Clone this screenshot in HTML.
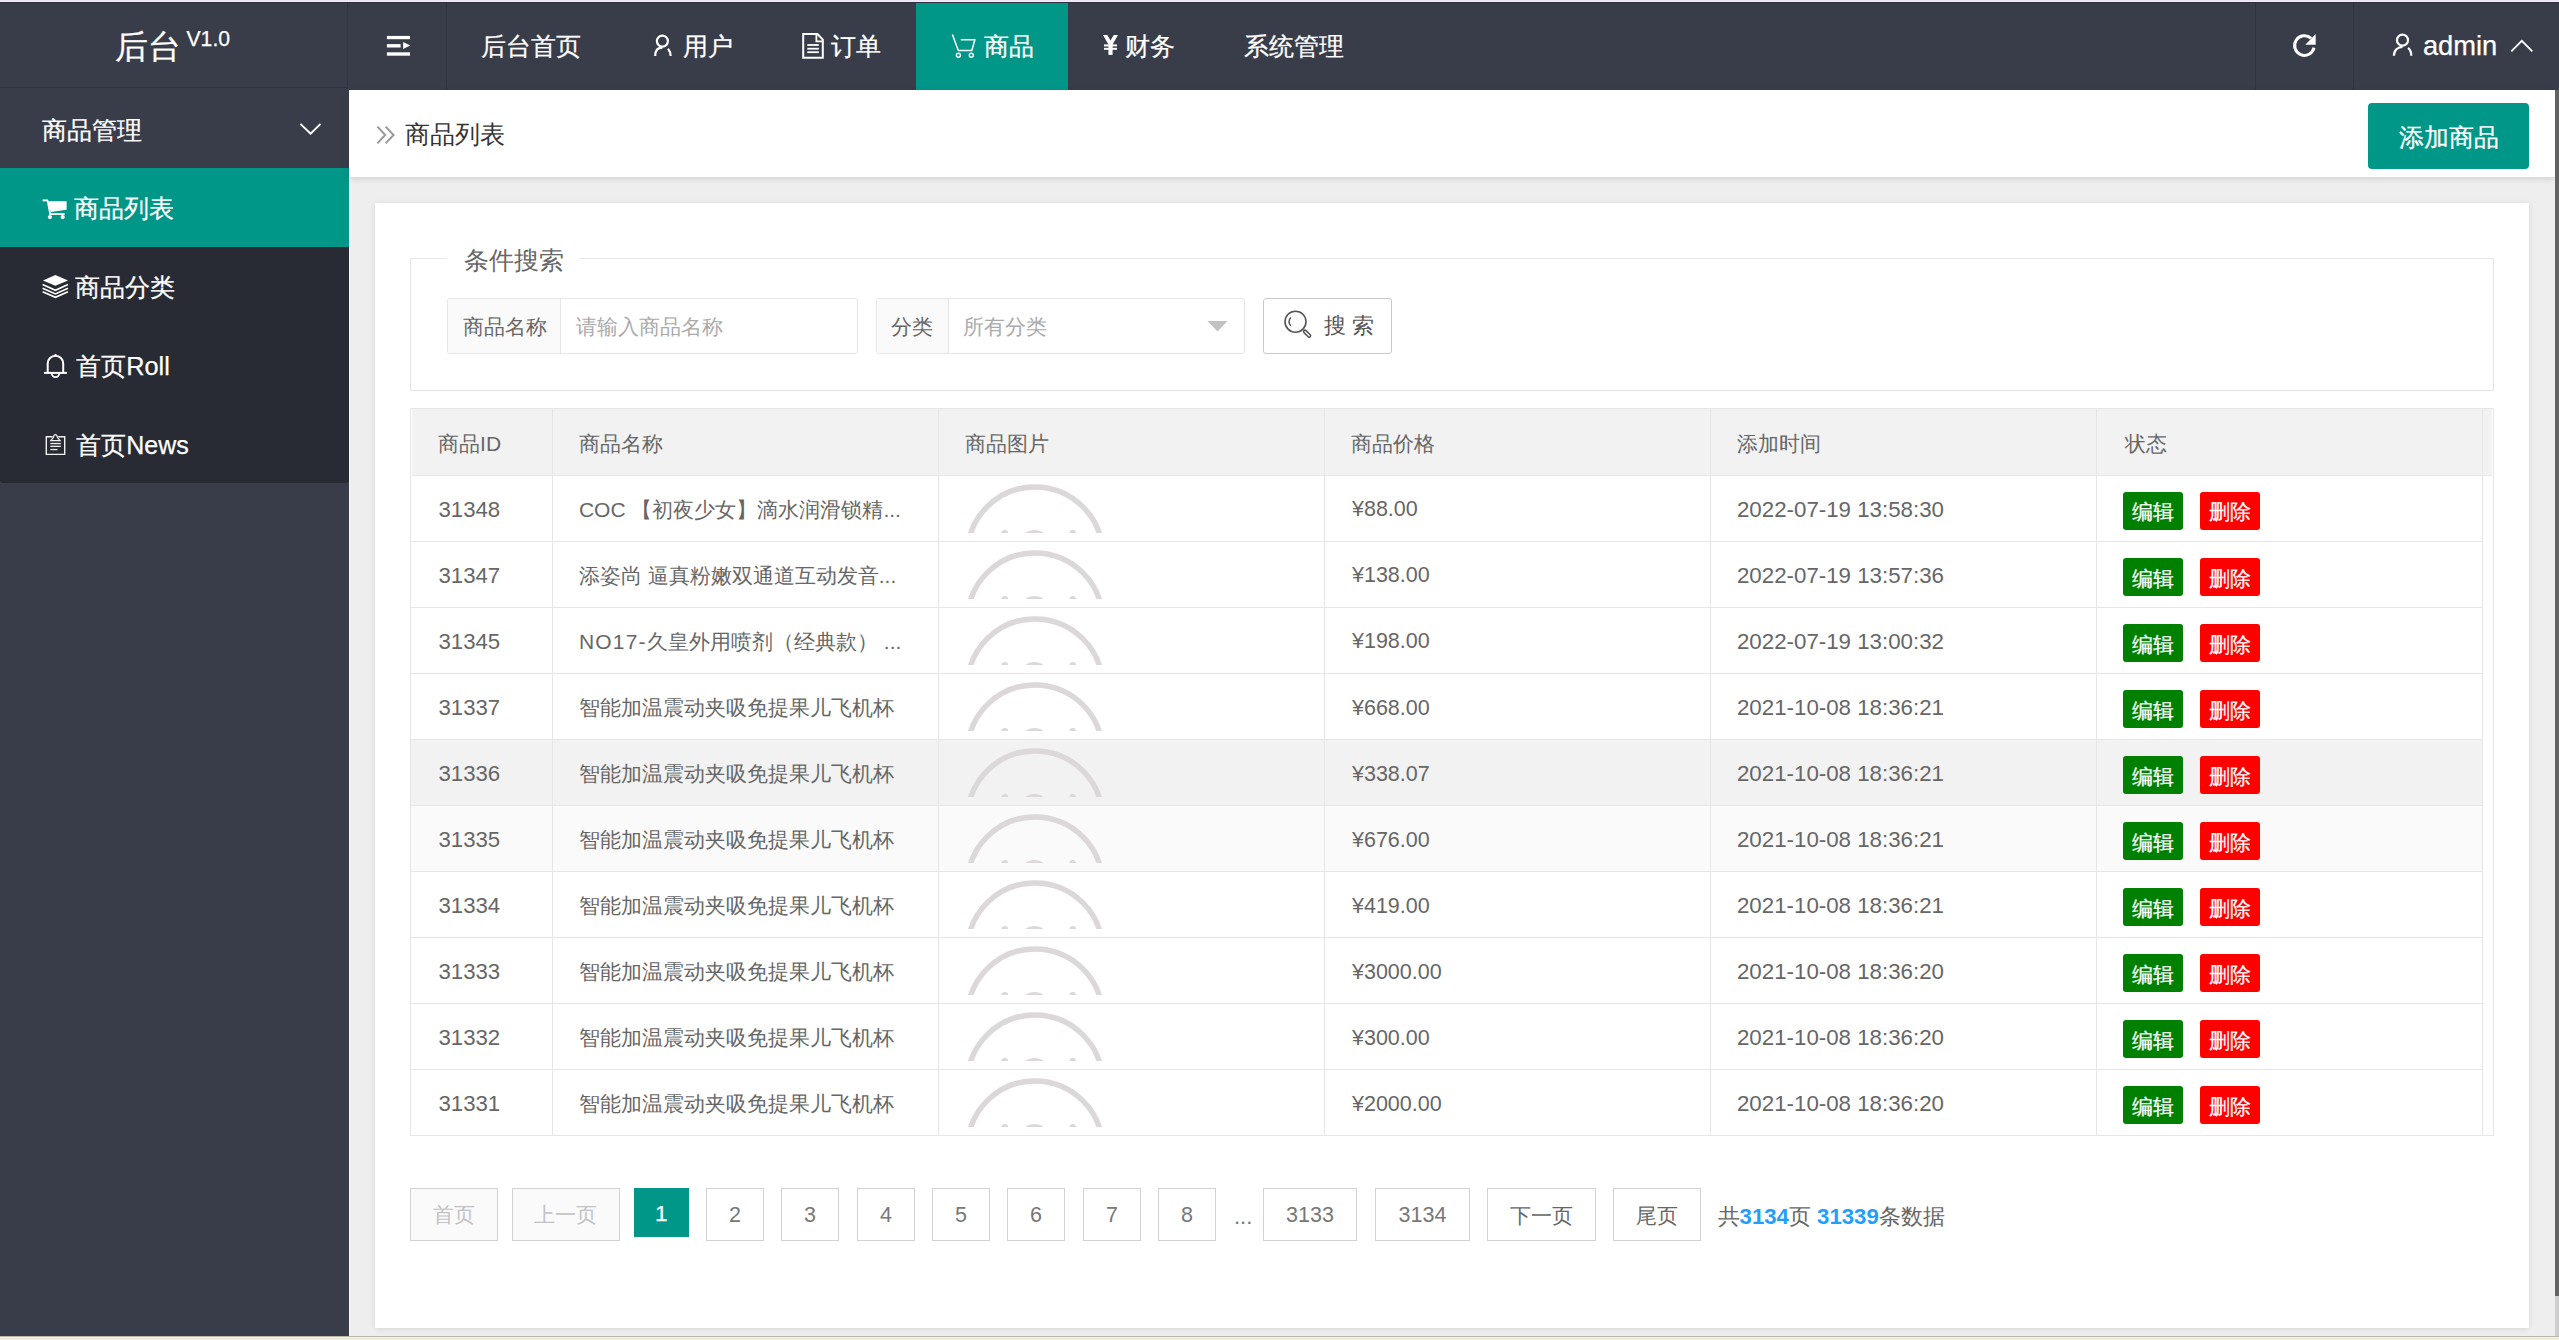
<!DOCTYPE html>
<html><head><meta charset="utf-8"><title>后台</title><style>
*{margin:0;padding:0;box-sizing:border-box}
html,body{width:2559px;height:1340px;overflow:hidden;background:#eeeeee;font-family:'Liberation Sans', sans-serif}
.t{position:absolute;white-space:nowrap}
.t.w{-webkit-text-stroke:0.25px #fff}
.abs{position:absolute}
</style></head>
<body>
<div class="abs" style="left:0;top:0;width:2559px;height:1px;background:#f0e2f5"></div>
<div class="abs" style="left:0;top:1px;width:2559px;height:1px;background:#fce9fc"></div>
<div class="abs" style="left:0;top:2px;width:2559px;height:1px;background:#2d303c"></div>
<div class="abs" style="left:0;top:3px;width:2559px;height:87px;background:#393d49"></div>
<div class="abs" style="left:0;top:87px;width:348px;height:1px;background:#30343f"></div>
<div class="abs" style="left:347px;top:3px;width:1px;height:85px;background:#30343f"></div>
<div class="abs" style="left:446px;top:3px;width:1px;height:87px;background:#30343f"></div>
<div class="abs" style="left:2255px;top:3px;width:1px;height:87px;background:#30343f"></div>
<div class="abs" style="left:2353px;top:3px;width:1px;height:87px;background:#30343f"></div>
<div class="abs" style="left:916px;top:3px;width:152px;height:87px;background:#009688"></div>
<div class="t w" style="left:114.61px;top:21.62px;font-size:33px;line-height:49.50px;color:#fff;font-weight:normal;">后台</div>
<div class="t w" style="left:186.49px;top:22.75px;font-size:21.2px;line-height:31.80px;color:#fff;font-weight:normal;">V1.0</div>
<svg class="abs" style="left:380px;top:25px" width="40" height="40" viewBox="380 25 40 40">
<rect x="386.9" y="35.9" width="23.1" height="3.3" fill="#fff"/>
<rect x="386.9" y="44.1" width="13.7" height="3.4" fill="#fff"/>
<polygon points="403.1,41.9 410.2,45.5 403.1,49" fill="#fff"/>
<rect x="386.9" y="52.3" width="23.1" height="3.4" fill="#fff"/>
</svg>
<div class="t w" style="left:481.25px;top:27.79px;font-size:25px;line-height:37.50px;color:#fff;font-weight:normal;">后台首页</div>
<div class="t w" style="left:683.05px;top:27.79px;font-size:25px;line-height:37.50px;color:#fff;font-weight:normal;">用户</div>
<div class="t w" style="left:830.95px;top:27.79px;font-size:25px;line-height:37.50px;color:#fff;font-weight:normal;">订单</div>
<div class="t w" style="left:984.25px;top:27.79px;font-size:25px;line-height:37.50px;color:#fff;font-weight:normal;">商品</div>
<div class="t w" style="left:1124.95px;top:27.79px;font-size:25px;line-height:37.50px;color:#fff;font-weight:normal;">财务</div>
<div class="t w" style="left:1244.15px;top:27.79px;font-size:25px;line-height:37.50px;color:#fff;font-weight:normal;">系统管理</div>
<svg class="abs" style="left:0;top:0;overflow:visible" width="1" height="1">
<circle cx="662.4" cy="41.1" r="5.5" fill="none" stroke="#fff" stroke-width="2.2"/>
<path d="M655.2 56 C655.2 50 658.4 47.7 662.4 47.7" fill="none" stroke="#fff" stroke-width="2.2"/>
<path d="M668.0 48.7 C669.6 50.6 670.6 53 670.6 56" fill="none" stroke="#fff" stroke-width="2.2"/>
</svg>
<svg class="abs" style="left:0;top:0;overflow:visible" width="1" height="1">
<path d="M803.2 34.1 H817.5 L822.8 39.6 V57.7 H803.2 Z" fill="none" stroke="#fff" stroke-width="2"/>
<path d="M816.4 34.5 V41.3 H822.5" fill="none" stroke="#fff" stroke-width="1.8"/>
<rect x="807.3" y="44.1" width="11.5" height="1.8" fill="#fff"/>
<rect x="807.3" y="47.8" width="11.5" height="1.8" fill="#fff"/>
<rect x="807.3" y="51.3" width="11.5" height="1.8" fill="#fff"/>
</svg>
<svg class="abs" style="left:0;top:0;overflow:visible" width="1" height="1">
<path d="M952.4 34.4 L958.3 50.5 H971.8 L974.9 39.7 H960.8" fill="none" stroke="#fff" stroke-width="1.5" stroke-linejoin="round"/>
<circle cx="958.4" cy="55.2" r="2" fill="none" stroke="#fff" stroke-width="1.4"/>
<circle cx="971.3" cy="55.2" r="2" fill="none" stroke="#fff" stroke-width="1.4"/>
</svg>
<svg class="abs" style="left:0;top:0;overflow:visible" width="1" height="1">
<polygon points="1103,35 1107.3,35 1110.5,40.6 1113.7,35 1118,35 1112.6,44.5 1108.4,44.5" fill="#fff"/>
<rect x="1104" y="44.4" width="13" height="2" fill="#fff"/>
<rect x="1104" y="47.8" width="13" height="2" fill="#fff"/>
<rect x="1108.4" y="44" width="4.2" height="10.9" fill="#fff"/>
</svg>
<svg class="abs" style="left:0;top:0;overflow:visible" width="1" height="1">
<path d="M2311.1 38.4 A9.8 9.8 0 1 0 2314 47.6" fill="none" stroke="#fff" stroke-width="3"/>
<polygon points="2315.7,34 2315.7,44.7 2305.3,44.7" fill="#fff"/>
</svg>
<svg class="abs" style="left:0;top:0;overflow:visible" width="1" height="1">
<circle cx="2402.5" cy="40.2" r="5.5" fill="none" stroke="#fff" stroke-width="2.2"/>
<path d="M2393.9 55.8 C2393.9 49.8 2398.5 46.800000000000004 2402.5 46.800000000000004" fill="none" stroke="#fff" stroke-width="2.2"/>
<path d="M2408.1 47.800000000000004 C2410.3 49.7 2411.3 52.8 2411.3 55.8" fill="none" stroke="#fff" stroke-width="2.2"/>
</svg>
<div class="t w" style="left:2422.91px;top:25.57px;font-size:27.3px;line-height:40.95px;color:#fff;font-weight:normal;">admin</div>
<svg class="abs" style="left:0;top:0;overflow:visible" width="1" height="1">
<path d="M2511.3 51.3 L2521.8 40.8 L2532.3 51.3" fill="none" stroke="#fff" stroke-width="1.8"/>
</svg>
<div class="abs" style="left:0;top:88px;width:349px;height:1248px;background:#393d49"></div>
<div class="abs" style="left:0;top:168px;width:349px;height:315px;background:#282b33;border-radius:0 0 3px 3px"></div>
<div class="abs" style="left:0;top:168px;width:349px;height:79px;background:#009688"></div>
<div class="t w" style="left:42.25px;top:112.09px;font-size:25px;line-height:37.50px;color:#fff;font-weight:normal;">商品管理</div>
<svg class="abs" style="left:0;top:0;overflow:visible" width="1" height="1">
<path d="M300.4 123.9 L310.6 133.6 L320.6 123.9" fill="none" stroke="#fff" stroke-width="2"/>
</svg>
<div class="t w" style="left:74.05px;top:190.39px;font-size:25px;line-height:37.50px;color:#fff;font-weight:normal;">商品列表</div>
<div class="t w" style="left:75.25px;top:268.89px;font-size:25px;line-height:37.50px;color:#fff;font-weight:normal;">商品分类</div>
<div class="t w" style="left:76.24px;top:347.76px;font-size:25.3px;line-height:37.95px;color:#fff;font-weight:normal;">首页Roll</div>
<div class="t w" style="left:76.25px;top:426.59px;font-size:25px;line-height:37.50px;color:#fff;font-weight:normal;">首页News</div>
<svg class="abs" style="left:0;top:0;overflow:visible" width="1" height="1">
<path d="M42.6 200.4 H48" stroke="#fff" stroke-width="1.9" fill="none"/>
<path d="M47.6 200.5 L50.2 214.2 H64.7" stroke="#fff" stroke-width="1.8" fill="none"/>
<polygon points="47.6,201.2 66.6,201.2 66.6,209.7 50.9,212.1" fill="#fff"/>
<circle cx="49.9" cy="217.1" r="2.1" fill="#fff"/>
<circle cx="62.7" cy="217.1" r="2.1" fill="#fff"/>
</svg>
<svg class="abs" style="left:0;top:0;overflow:visible" width="1" height="1">
<polygon points="42.9,280.6 55.4,275.1 68,280.6 55.4,285.8" fill="#fff"/>
<path d="M42.6 284.6 L55.4 290.3 L68 284.6 M42.6 288.2 L55.4 293.9 L68 288.2 M42.6 291.7 L55.4 297.3 L68 291.7" stroke="#fff" stroke-width="1.6" fill="none"/>
</svg>
<svg class="abs" style="left:0;top:0;overflow:visible" width="1" height="1">
<path d="M47.7 372 V363.5 A7.7 7.7 0 0 1 63.2 363.5 V372" stroke="#fff" stroke-width="2" fill="none"/>
<rect x="54.6" y="354" width="1.8" height="2.5" fill="#fff"/>
<rect x="44" y="371.9" width="22.9" height="2" fill="#fff"/>
<path d="M51.8 373.5 A3.7 3.7 0 0 0 59.2 373.5" stroke="#fff" stroke-width="1.8" fill="none"/>
</svg>
<svg class="abs" style="left:0;top:0;overflow:visible" width="1" height="1">
<path d="M52.6 436.8 H46.3 V454.4 H64.7 V436.8 H58.2" stroke="#f2f2f2" stroke-width="1.4" fill="none"/>
<path d="M50.8 440.6 L53.3 437.6 Q53.8 434.6 55.4 434.6 Q57 434.6 57.5 437.6 L60.1 440.6 Z" stroke="#f2f2f2" stroke-width="1.2" fill="none"/>
<rect x="50.3" y="442.9" width="10.5" height="1.3" fill="#eee"/>
<rect x="50.3" y="445.7" width="10.5" height="1.3" fill="#eee"/>
<rect x="50.3" y="448.9" width="7.2" height="1.3" fill="#eee"/>
</svg>
<div class="abs" style="left:349px;top:90px;width:1px;height:1246px;background:#fcf7f7"></div>
<div class="abs" style="left:349px;top:90px;width:2206px;height:87px;background:#fff;box-shadow:0 2px 6px rgba(0,0,0,0.12)"></div>
<div class="t" style="left:404.85px;top:115.59px;font-size:25px;line-height:37.50px;color:#333;font-weight:normal;">商品列表</div>
<svg class="abs" style="left:0;top:0;overflow:visible" width="1" height="1">
<path d="M377.4 126.6 L385.2 135 L377.4 143.4 M385.6 126.6 L393.6 135 L385.6 143.4" stroke="#999" stroke-width="2" fill="none"/>
</svg>
<div class="abs" style="left:2368px;top:103px;width:161px;height:66px;background:#009688;border-radius:4px"></div>
<div class="t w" style="left:2398.76px;top:119.11px;font-size:24.8px;line-height:37.20px;color:#fff;font-weight:normal;">添加商品</div>
<div class="abs" style="left:375px;top:203px;width:2154px;height:1125px;background:#fff;box-shadow:0 1px 6px rgba(0,0,0,0.10)"></div>
<div class="abs" style="left:410px;top:258px;width:2084px;height:133px;border:1px solid #e6e6e6"></div>
<div class="abs" style="left:447px;top:250px;width:133px;height:16px;background:#fff"></div>
<div class="t" style="left:464.25px;top:241.79px;font-size:25px;line-height:37.50px;color:#666;font-weight:normal;">条件搜索</div>
<div class="abs" style="left:447px;top:298px;width:411px;height:56px;border:1px solid #e6e6e6;border-radius:3px;background:#fff"></div>
<div class="abs" style="left:448px;top:299px;width:113px;height:54px;background:#fafafa;border-right:1px solid #e6e6e6;border-radius:2px 0 0 2px"></div>
<div class="t" style="left:462.97px;top:310.97px;font-size:21px;line-height:31.50px;color:#666;font-weight:normal;">商品名称</div>
<div class="t" style="left:576.37px;top:310.97px;font-size:21px;line-height:31.50px;color:#aaa;font-weight:normal;">请输入商品名称</div>
<div class="abs" style="left:876px;top:298px;width:369px;height:56px;border:1px solid #e6e6e6;border-radius:3px;background:#fff"></div>
<div class="abs" style="left:877px;top:299px;width:72px;height:54px;background:#fafafa;border-right:1px solid #e6e6e6;border-radius:2px 0 0 2px"></div>
<div class="t" style="left:891.07px;top:310.97px;font-size:21px;line-height:31.50px;color:#666;font-weight:normal;">分类</div>
<div class="t" style="left:962.67px;top:310.97px;font-size:21px;line-height:31.50px;color:#aaa;font-weight:normal;">所有分类</div>
<svg class="abs" style="left:0;top:0;overflow:visible" width="1" height="1">
<polygon points="1207.4,321 1227.6,321 1217.5,331.4" fill="#c2c2c2"/>
</svg>
<div class="abs" style="left:1263px;top:298px;width:129px;height:56px;border:1px solid #c9c9c9;border-radius:3px;background:#fff"></div>
<svg class="abs" style="left:0;top:0;overflow:visible" width="1" height="1">
<circle cx="1295.5" cy="321.7" r="10.5" stroke="#555" stroke-width="1.6" fill="none"/>
<path d="M1290.8 317.5 A5.8 5.8 0 0 0 1290.8 325.8" stroke="#555" stroke-width="1.5" fill="none"/>
<path d="M1305 331.6 L1309.2 335.8" stroke="#555" stroke-width="4.4" stroke-linecap="round" fill="none"/>
<path d="M1305 331.6 L1309.2 335.8" stroke="#fff" stroke-width="1.3" stroke-linecap="round" fill="none"/>
</svg>
<div class="t" style="left:1324.36px;top:310.43px;font-size:21.5px;line-height:32.25px;color:#555;font-weight:normal;">搜&nbsp;索</div>
<div class="abs" style="left:410px;top:408px;width:2084px;height:728px;border:1px solid #e6e6e6;background:#fff"></div>
<div class="abs" style="left:412px;top:409px;width:2080px;height:66px;background:#f2f2f2"></div>
<div class="abs" style="left:412px;top:475px;width:2080px;height:1px;background:#e6e6e6"></div>
<div class="abs" style="left:411px;top:740px;width:2072px;height:65px;background:#f2f2f2"></div>
<div class="abs" style="left:411px;top:806px;width:2072px;height:65px;background:#fafafa"></div>
<div class="abs" style="left:411px;top:541px;width:2072px;height:1px;background:#e6e6e6"></div>
<div class="abs" style="left:411px;top:607px;width:2072px;height:1px;background:#e6e6e6"></div>
<div class="abs" style="left:411px;top:673px;width:2072px;height:1px;background:#e6e6e6"></div>
<div class="abs" style="left:411px;top:739px;width:2072px;height:1px;background:#e6e6e6"></div>
<div class="abs" style="left:411px;top:805px;width:2072px;height:1px;background:#e6e6e6"></div>
<div class="abs" style="left:411px;top:871px;width:2072px;height:1px;background:#e6e6e6"></div>
<div class="abs" style="left:411px;top:937px;width:2072px;height:1px;background:#e6e6e6"></div>
<div class="abs" style="left:411px;top:1003px;width:2072px;height:1px;background:#e6e6e6"></div>
<div class="abs" style="left:411px;top:1069px;width:2072px;height:1px;background:#e6e6e6"></div>
<div class="abs" style="left:552px;top:409px;width:1px;height:726px;background:#e6e6e6"></div>
<div class="abs" style="left:938px;top:409px;width:1px;height:726px;background:#e6e6e6"></div>
<div class="abs" style="left:1324px;top:409px;width:1px;height:726px;background:#e6e6e6"></div>
<div class="abs" style="left:1710px;top:409px;width:1px;height:726px;background:#e6e6e6"></div>
<div class="abs" style="left:2096px;top:409px;width:1px;height:726px;background:#e6e6e6"></div>
<div class="abs" style="left:2482px;top:409px;width:1px;height:726px;background:#e6e6e6"></div>
<div class="t" style="left:438.07px;top:428.37px;font-size:21px;line-height:31.50px;color:#666;font-weight:normal;">商品ID</div>
<div class="t" style="left:579.37px;top:428.37px;font-size:21px;line-height:31.50px;color:#666;font-weight:normal;">商品名称</div>
<div class="t" style="left:965.37px;top:428.37px;font-size:21px;line-height:31.50px;color:#666;font-weight:normal;">商品图片</div>
<div class="t" style="left:1351.37px;top:428.37px;font-size:21px;line-height:31.50px;color:#666;font-weight:normal;">商品价格</div>
<div class="t" style="left:1736.67px;top:428.37px;font-size:21px;line-height:31.50px;color:#666;font-weight:normal;">添加时间</div>
<div class="t" style="left:2124.87px;top:428.37px;font-size:21px;line-height:31.50px;color:#666;font-weight:normal;">状态</div>
<div class="t" style="left:438.51px;top:492.66px;font-size:22.2px;line-height:33.30px;color:#666;font-weight:normal;">31348</div>
<div class="t" style="left:578.95px;top:493.97px;font-size:21px;line-height:31.50px;color:#666;font-weight:normal;">COC 【初夜少女】滴水润滑锁精...</div>
<div class="t" style="left:1352.00px;top:493.43px;font-size:21.5px;line-height:32.25px;color:#666;font-weight:normal;">¥88.00</div>
<div class="t" style="left:1736.98px;top:492.55px;font-size:22.3px;line-height:33.45px;color:#666;font-weight:normal;">2022-07-19 13:58:30</div>
<svg class="abs" style="left:940px;top:476px" width="384" height="57" viewBox="0 0 384 57">
<circle cx="95" cy="78.4" r="67.5" stroke="#dcd8da" stroke-width="5.5" fill="none"/>
<circle cx="64.8" cy="57.5" r="3.4" fill="#dcd8da"/>
<circle cx="132.7" cy="57.5" r="3.4" fill="#dcd8da"/>
<ellipse cx="94.5" cy="59.5" rx="10" ry="5.5" fill="#dcd8da"/>
</svg>
<div class="abs" style="left:2123px;top:492px;width:60px;height:38px;background:#008000;border-radius:3px"></div>
<div class="abs" style="left:2200px;top:492px;width:60px;height:38px;background:#ff0000;border-radius:3px"></div>
<div class="t w" style="left:2132.37px;top:496.47px;font-size:21px;line-height:31.50px;color:#fff;font-weight:normal;">编辑</div>
<div class="t w" style="left:2209.37px;top:496.47px;font-size:21px;line-height:31.50px;color:#fff;font-weight:normal;">删除</div>
<div class="t" style="left:438.51px;top:558.69px;font-size:22.2px;line-height:33.30px;color:#666;font-weight:normal;">31347</div>
<div class="t" style="left:578.95px;top:560.00px;font-size:21px;line-height:31.50px;color:#666;font-weight:normal;">添姿尚 逼真粉嫩双通道互动发音...</div>
<div class="t" style="left:1352.00px;top:559.46px;font-size:21.5px;line-height:32.25px;color:#666;font-weight:normal;">¥138.00</div>
<div class="t" style="left:1736.98px;top:558.58px;font-size:22.3px;line-height:33.45px;color:#666;font-weight:normal;">2022-07-19 13:57:36</div>
<svg class="abs" style="left:940px;top:542px" width="384" height="57" viewBox="0 0 384 57">
<circle cx="95" cy="78.4" r="67.5" stroke="#dcd8da" stroke-width="5.5" fill="none"/>
<circle cx="64.8" cy="57.5" r="3.4" fill="#dcd8da"/>
<circle cx="132.7" cy="57.5" r="3.4" fill="#dcd8da"/>
<ellipse cx="94.5" cy="59.5" rx="10" ry="5.5" fill="#dcd8da"/>
</svg>
<div class="abs" style="left:2123px;top:558px;width:60px;height:38px;background:#008000;border-radius:3px"></div>
<div class="abs" style="left:2200px;top:558px;width:60px;height:38px;background:#ff0000;border-radius:3px"></div>
<div class="t w" style="left:2132.37px;top:562.50px;font-size:21px;line-height:31.50px;color:#fff;font-weight:normal;">编辑</div>
<div class="t w" style="left:2209.37px;top:562.50px;font-size:21px;line-height:31.50px;color:#fff;font-weight:normal;">删除</div>
<div class="t" style="left:438.51px;top:624.72px;font-size:22.2px;line-height:33.30px;color:#666;font-weight:normal;">31345</div>
<div class="t" style="left:578.95px;top:626.03px;font-size:21px;line-height:31.50px;color:#666;font-weight:normal;"><span style="letter-spacing:1.2px">NO17-</span>久皇外用喷剂（经典款）<span style="margin-left:6px">...</span></div>
<div class="t" style="left:1352.00px;top:625.49px;font-size:21.5px;line-height:32.25px;color:#666;font-weight:normal;">¥198.00</div>
<div class="t" style="left:1736.98px;top:624.61px;font-size:22.3px;line-height:33.45px;color:#666;font-weight:normal;">2022-07-19 13:00:32</div>
<svg class="abs" style="left:940px;top:608px" width="384" height="57" viewBox="0 0 384 57">
<circle cx="95" cy="78.4" r="67.5" stroke="#dcd8da" stroke-width="5.5" fill="none"/>
<circle cx="64.8" cy="57.5" r="3.4" fill="#dcd8da"/>
<circle cx="132.7" cy="57.5" r="3.4" fill="#dcd8da"/>
<ellipse cx="94.5" cy="59.5" rx="10" ry="5.5" fill="#dcd8da"/>
</svg>
<div class="abs" style="left:2123px;top:624px;width:60px;height:38px;background:#008000;border-radius:3px"></div>
<div class="abs" style="left:2200px;top:624px;width:60px;height:38px;background:#ff0000;border-radius:3px"></div>
<div class="t w" style="left:2132.37px;top:628.53px;font-size:21px;line-height:31.50px;color:#fff;font-weight:normal;">编辑</div>
<div class="t w" style="left:2209.37px;top:628.53px;font-size:21px;line-height:31.50px;color:#fff;font-weight:normal;">删除</div>
<div class="t" style="left:438.51px;top:690.75px;font-size:22.2px;line-height:33.30px;color:#666;font-weight:normal;">31337</div>
<div class="t" style="left:578.95px;top:692.06px;font-size:21px;line-height:31.50px;color:#666;font-weight:normal;">智能加温震动夹吸免提果儿飞机杯</div>
<div class="t" style="left:1352.00px;top:691.52px;font-size:21.5px;line-height:32.25px;color:#666;font-weight:normal;">¥668.00</div>
<div class="t" style="left:1736.98px;top:690.64px;font-size:22.3px;line-height:33.45px;color:#666;font-weight:normal;">2021-10-08 18:36:21</div>
<svg class="abs" style="left:940px;top:674px" width="384" height="57" viewBox="0 0 384 57">
<circle cx="95" cy="78.4" r="67.5" stroke="#dcd8da" stroke-width="5.5" fill="none"/>
<circle cx="64.8" cy="57.5" r="3.4" fill="#dcd8da"/>
<circle cx="132.7" cy="57.5" r="3.4" fill="#dcd8da"/>
<ellipse cx="94.5" cy="59.5" rx="10" ry="5.5" fill="#dcd8da"/>
</svg>
<div class="abs" style="left:2123px;top:690px;width:60px;height:38px;background:#008000;border-radius:3px"></div>
<div class="abs" style="left:2200px;top:690px;width:60px;height:38px;background:#ff0000;border-radius:3px"></div>
<div class="t w" style="left:2132.37px;top:694.56px;font-size:21px;line-height:31.50px;color:#fff;font-weight:normal;">编辑</div>
<div class="t w" style="left:2209.37px;top:694.56px;font-size:21px;line-height:31.50px;color:#fff;font-weight:normal;">删除</div>
<div class="t" style="left:438.51px;top:756.78px;font-size:22.2px;line-height:33.30px;color:#666;font-weight:normal;">31336</div>
<div class="t" style="left:578.95px;top:758.09px;font-size:21px;line-height:31.50px;color:#666;font-weight:normal;">智能加温震动夹吸免提果儿飞机杯</div>
<div class="t" style="left:1352.00px;top:757.55px;font-size:21.5px;line-height:32.25px;color:#666;font-weight:normal;">¥338.07</div>
<div class="t" style="left:1736.98px;top:756.67px;font-size:22.3px;line-height:33.45px;color:#666;font-weight:normal;">2021-10-08 18:36:21</div>
<svg class="abs" style="left:940px;top:740px" width="384" height="57" viewBox="0 0 384 57">
<circle cx="95" cy="78.4" r="67.5" stroke="#dcd8da" stroke-width="5.5" fill="none"/>
<circle cx="64.8" cy="57.5" r="3.4" fill="#dcd8da"/>
<circle cx="132.7" cy="57.5" r="3.4" fill="#dcd8da"/>
<ellipse cx="94.5" cy="59.5" rx="10" ry="5.5" fill="#dcd8da"/>
</svg>
<div class="abs" style="left:2123px;top:756px;width:60px;height:38px;background:#008000;border-radius:3px"></div>
<div class="abs" style="left:2200px;top:756px;width:60px;height:38px;background:#ff0000;border-radius:3px"></div>
<div class="t w" style="left:2132.37px;top:760.59px;font-size:21px;line-height:31.50px;color:#fff;font-weight:normal;">编辑</div>
<div class="t w" style="left:2209.37px;top:760.59px;font-size:21px;line-height:31.50px;color:#fff;font-weight:normal;">删除</div>
<div class="t" style="left:438.51px;top:822.81px;font-size:22.2px;line-height:33.30px;color:#666;font-weight:normal;">31335</div>
<div class="t" style="left:578.95px;top:824.12px;font-size:21px;line-height:31.50px;color:#666;font-weight:normal;">智能加温震动夹吸免提果儿飞机杯</div>
<div class="t" style="left:1352.00px;top:823.58px;font-size:21.5px;line-height:32.25px;color:#666;font-weight:normal;">¥676.00</div>
<div class="t" style="left:1736.98px;top:822.70px;font-size:22.3px;line-height:33.45px;color:#666;font-weight:normal;">2021-10-08 18:36:21</div>
<svg class="abs" style="left:940px;top:806px" width="384" height="57" viewBox="0 0 384 57">
<circle cx="95" cy="78.4" r="67.5" stroke="#dcd8da" stroke-width="5.5" fill="none"/>
<circle cx="64.8" cy="57.5" r="3.4" fill="#dcd8da"/>
<circle cx="132.7" cy="57.5" r="3.4" fill="#dcd8da"/>
<ellipse cx="94.5" cy="59.5" rx="10" ry="5.5" fill="#dcd8da"/>
</svg>
<div class="abs" style="left:2123px;top:822px;width:60px;height:38px;background:#008000;border-radius:3px"></div>
<div class="abs" style="left:2200px;top:822px;width:60px;height:38px;background:#ff0000;border-radius:3px"></div>
<div class="t w" style="left:2132.37px;top:826.62px;font-size:21px;line-height:31.50px;color:#fff;font-weight:normal;">编辑</div>
<div class="t w" style="left:2209.37px;top:826.62px;font-size:21px;line-height:31.50px;color:#fff;font-weight:normal;">删除</div>
<div class="t" style="left:438.51px;top:888.84px;font-size:22.2px;line-height:33.30px;color:#666;font-weight:normal;">31334</div>
<div class="t" style="left:578.95px;top:890.15px;font-size:21px;line-height:31.50px;color:#666;font-weight:normal;">智能加温震动夹吸免提果儿飞机杯</div>
<div class="t" style="left:1352.00px;top:889.61px;font-size:21.5px;line-height:32.25px;color:#666;font-weight:normal;">¥419.00</div>
<div class="t" style="left:1736.98px;top:888.73px;font-size:22.3px;line-height:33.45px;color:#666;font-weight:normal;">2021-10-08 18:36:21</div>
<svg class="abs" style="left:940px;top:872px" width="384" height="57" viewBox="0 0 384 57">
<circle cx="95" cy="78.4" r="67.5" stroke="#dcd8da" stroke-width="5.5" fill="none"/>
<circle cx="64.8" cy="57.5" r="3.4" fill="#dcd8da"/>
<circle cx="132.7" cy="57.5" r="3.4" fill="#dcd8da"/>
<ellipse cx="94.5" cy="59.5" rx="10" ry="5.5" fill="#dcd8da"/>
</svg>
<div class="abs" style="left:2123px;top:888px;width:60px;height:38px;background:#008000;border-radius:3px"></div>
<div class="abs" style="left:2200px;top:888px;width:60px;height:38px;background:#ff0000;border-radius:3px"></div>
<div class="t w" style="left:2132.37px;top:892.65px;font-size:21px;line-height:31.50px;color:#fff;font-weight:normal;">编辑</div>
<div class="t w" style="left:2209.37px;top:892.65px;font-size:21px;line-height:31.50px;color:#fff;font-weight:normal;">删除</div>
<div class="t" style="left:438.51px;top:954.87px;font-size:22.2px;line-height:33.30px;color:#666;font-weight:normal;">31333</div>
<div class="t" style="left:578.95px;top:956.18px;font-size:21px;line-height:31.50px;color:#666;font-weight:normal;">智能加温震动夹吸免提果儿飞机杯</div>
<div class="t" style="left:1352.00px;top:955.64px;font-size:21.5px;line-height:32.25px;color:#666;font-weight:normal;">¥3000.00</div>
<div class="t" style="left:1736.98px;top:954.76px;font-size:22.3px;line-height:33.45px;color:#666;font-weight:normal;">2021-10-08 18:36:20</div>
<svg class="abs" style="left:940px;top:938px" width="384" height="57" viewBox="0 0 384 57">
<circle cx="95" cy="78.4" r="67.5" stroke="#dcd8da" stroke-width="5.5" fill="none"/>
<circle cx="64.8" cy="57.5" r="3.4" fill="#dcd8da"/>
<circle cx="132.7" cy="57.5" r="3.4" fill="#dcd8da"/>
<ellipse cx="94.5" cy="59.5" rx="10" ry="5.5" fill="#dcd8da"/>
</svg>
<div class="abs" style="left:2123px;top:954px;width:60px;height:38px;background:#008000;border-radius:3px"></div>
<div class="abs" style="left:2200px;top:954px;width:60px;height:38px;background:#ff0000;border-radius:3px"></div>
<div class="t w" style="left:2132.37px;top:958.68px;font-size:21px;line-height:31.50px;color:#fff;font-weight:normal;">编辑</div>
<div class="t w" style="left:2209.37px;top:958.68px;font-size:21px;line-height:31.50px;color:#fff;font-weight:normal;">删除</div>
<div class="t" style="left:438.51px;top:1020.90px;font-size:22.2px;line-height:33.30px;color:#666;font-weight:normal;">31332</div>
<div class="t" style="left:578.95px;top:1022.21px;font-size:21px;line-height:31.50px;color:#666;font-weight:normal;">智能加温震动夹吸免提果儿飞机杯</div>
<div class="t" style="left:1352.00px;top:1021.67px;font-size:21.5px;line-height:32.25px;color:#666;font-weight:normal;">¥300.00</div>
<div class="t" style="left:1736.98px;top:1020.79px;font-size:22.3px;line-height:33.45px;color:#666;font-weight:normal;">2021-10-08 18:36:20</div>
<svg class="abs" style="left:940px;top:1004px" width="384" height="57" viewBox="0 0 384 57">
<circle cx="95" cy="78.4" r="67.5" stroke="#dcd8da" stroke-width="5.5" fill="none"/>
<circle cx="64.8" cy="57.5" r="3.4" fill="#dcd8da"/>
<circle cx="132.7" cy="57.5" r="3.4" fill="#dcd8da"/>
<ellipse cx="94.5" cy="59.5" rx="10" ry="5.5" fill="#dcd8da"/>
</svg>
<div class="abs" style="left:2123px;top:1020px;width:60px;height:38px;background:#008000;border-radius:3px"></div>
<div class="abs" style="left:2200px;top:1020px;width:60px;height:38px;background:#ff0000;border-radius:3px"></div>
<div class="t w" style="left:2132.37px;top:1024.71px;font-size:21px;line-height:31.50px;color:#fff;font-weight:normal;">编辑</div>
<div class="t w" style="left:2209.37px;top:1024.71px;font-size:21px;line-height:31.50px;color:#fff;font-weight:normal;">删除</div>
<div class="t" style="left:438.51px;top:1086.93px;font-size:22.2px;line-height:33.30px;color:#666;font-weight:normal;">31331</div>
<div class="t" style="left:578.95px;top:1088.24px;font-size:21px;line-height:31.50px;color:#666;font-weight:normal;">智能加温震动夹吸免提果儿飞机杯</div>
<div class="t" style="left:1352.00px;top:1087.70px;font-size:21.5px;line-height:32.25px;color:#666;font-weight:normal;">¥2000.00</div>
<div class="t" style="left:1736.98px;top:1086.82px;font-size:22.3px;line-height:33.45px;color:#666;font-weight:normal;">2021-10-08 18:36:20</div>
<svg class="abs" style="left:940px;top:1070px" width="384" height="57" viewBox="0 0 384 57">
<circle cx="95" cy="78.4" r="67.5" stroke="#dcd8da" stroke-width="5.5" fill="none"/>
<circle cx="64.8" cy="57.5" r="3.4" fill="#dcd8da"/>
<circle cx="132.7" cy="57.5" r="3.4" fill="#dcd8da"/>
<ellipse cx="94.5" cy="59.5" rx="10" ry="5.5" fill="#dcd8da"/>
</svg>
<div class="abs" style="left:2123px;top:1086px;width:60px;height:38px;background:#008000;border-radius:3px"></div>
<div class="abs" style="left:2200px;top:1086px;width:60px;height:38px;background:#ff0000;border-radius:3px"></div>
<div class="t w" style="left:2132.37px;top:1090.74px;font-size:21px;line-height:31.50px;color:#fff;font-weight:normal;">编辑</div>
<div class="t w" style="left:2209.37px;top:1090.74px;font-size:21px;line-height:31.50px;color:#fff;font-weight:normal;">删除</div>
<div class="abs" style="left:410px;top:1188px;width:88px;height:53px;border:1px solid #d2d2d2;background:#fafafa"></div>
<div class="t" style="left:432.70px;top:1200.14px;font-size:21.3px;line-height:31.95px;color:#c2c2c2;font-weight:normal;">首页</div>
<div class="abs" style="left:512px;top:1188px;width:108px;height:53px;border:1px solid #d2d2d2;background:#fafafa"></div>
<div class="t" style="left:534.05px;top:1200.14px;font-size:21.3px;line-height:31.95px;color:#c2c2c2;font-weight:normal;">上一页</div>
<div class="abs" style="left:634px;top:1188px;width:55px;height:49px;background:#009688"></div>
<div class="t w" style="left:655.00px;top:1196.63px;font-size:22.5px;line-height:33.75px;color:#fff;font-weight:normal;">1</div>
<div class="abs" style="left:706px;top:1188px;width:58px;height:53px;border:1px solid #d2d2d2;display:flex;align-items:center;justify-content:center"></div>
<div class="t" style="left:706px;width:58px;text-align:center;top:1198.93px;font-size:21.5px;line-height:32.25px;color:#777">2</div>
<div class="abs" style="left:781px;top:1188px;width:58px;height:53px;border:1px solid #d2d2d2;display:flex;align-items:center;justify-content:center"></div>
<div class="t" style="left:781px;width:58px;text-align:center;top:1198.93px;font-size:21.5px;line-height:32.25px;color:#777">3</div>
<div class="abs" style="left:857px;top:1188px;width:58px;height:53px;border:1px solid #d2d2d2;display:flex;align-items:center;justify-content:center"></div>
<div class="t" style="left:857px;width:58px;text-align:center;top:1198.93px;font-size:21.5px;line-height:32.25px;color:#777">4</div>
<div class="abs" style="left:932px;top:1188px;width:58px;height:53px;border:1px solid #d2d2d2;display:flex;align-items:center;justify-content:center"></div>
<div class="t" style="left:932px;width:58px;text-align:center;top:1198.93px;font-size:21.5px;line-height:32.25px;color:#777">5</div>
<div class="abs" style="left:1007px;top:1188px;width:58px;height:53px;border:1px solid #d2d2d2;display:flex;align-items:center;justify-content:center"></div>
<div class="t" style="left:1007px;width:58px;text-align:center;top:1198.93px;font-size:21.5px;line-height:32.25px;color:#777">6</div>
<div class="abs" style="left:1083px;top:1188px;width:58px;height:53px;border:1px solid #d2d2d2;display:flex;align-items:center;justify-content:center"></div>
<div class="t" style="left:1083px;width:58px;text-align:center;top:1198.93px;font-size:21.5px;line-height:32.25px;color:#777">7</div>
<div class="abs" style="left:1158px;top:1188px;width:58px;height:53px;border:1px solid #d2d2d2;display:flex;align-items:center;justify-content:center"></div>
<div class="t" style="left:1158px;width:58px;text-align:center;top:1198.93px;font-size:21.5px;line-height:32.25px;color:#777">8</div>
<div class="abs" style="left:1263px;top:1188px;width:94px;height:53px;border:1px solid #d2d2d2;display:flex;align-items:center;justify-content:center"></div>
<div class="t" style="left:1263px;width:94px;text-align:center;top:1198.93px;font-size:21.5px;line-height:32.25px;color:#777">3133</div>
<div class="abs" style="left:1375px;top:1188px;width:95px;height:53px;border:1px solid #d2d2d2;display:flex;align-items:center;justify-content:center"></div>
<div class="t" style="left:1375px;width:95px;text-align:center;top:1198.93px;font-size:21.5px;line-height:32.25px;color:#777">3134</div>
<div class="t" style="left:1234.00px;top:1199.88px;font-size:22px;line-height:33.00px;color:#777;font-weight:normal;">...</div>
<div class="abs" style="left:1487px;top:1188px;width:109px;height:53px;border:1px solid #d2d2d2"></div>
<div class="t" style="left:1487px;width:109px;text-align:center;top:1200.47px;font-size:21px;line-height:31.5px;color:#666">下一页</div>
<div class="abs" style="left:1613px;top:1188px;width:88px;height:53px;border:1px solid #d2d2d2"></div>
<div class="t" style="left:1613px;width:88px;text-align:center;top:1200.47px;font-size:21px;line-height:31.5px;color:#666">尾页</div>
<div class="t" style="left:1717.56px;top:1199.66px;font-size:22.2px;line-height:33.30px;color:#666;font-weight:normal;">共<b style="color:#1e9fff">3134</b>页 <b style="color:#1e9fff">31339</b>条数据</div>
<div class="abs" style="left:2555px;top:90px;width:4px;height:1246px;background:#cfcfcf"></div>
<div class="abs" style="left:2555px;top:90px;width:4px;height:1206px;background:#636363"></div>
<div class="abs" style="left:0;top:1336px;width:2559px;height:1px;background:#b9b8a8"></div>
<div class="abs" style="left:0;top:1337px;width:2559px;height:3px;background:#eeecdc"></div>
</body></html>
